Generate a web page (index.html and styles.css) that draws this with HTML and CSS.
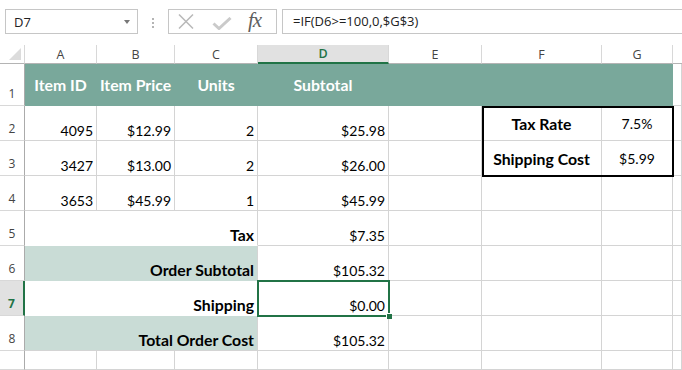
FILE: index.html
```html
<!DOCTYPE html>
<html lang="en">
<head>
    <meta charset="UTF-8">
    <title>Order Sheet</title>
    <link rel="stylesheet" href="styles.css">
</head>
<body>
    <div class="toolbar">
        <div class="namebox">
            <span>D7</span>
            <span class="caret"></span>
        </div>
        <div class="grip"><i></i><i></i><i></i></div>
        <div class="fn-buttons">
            <svg class="ico-x" width="16" height="15" viewBox="0 0 16 15">
                <path d="M1 0.5 L15 14.5 M15 0.5 L1 14.5" stroke="#b9b9b9" stroke-width="1.5" fill="none"/>
            </svg>
            <svg class="ico-check" width="20" height="13" viewBox="0 0 20 13">
                <path d="M1.5 6.5 L7 11.5 L18.5 1" stroke="#cacaca" stroke-width="3" fill="none"/>
            </svg>
            <span class="fx">fx</span>
        </div>
        <div class="formula">=IF(D6&gt;=100,0,$G$3)</div>
    </div>

    <div class="sheet-wrap">
        <div class="sheet">
            <!-- column headers -->
            <div class="ch corner"><span class="tri"></span></div>
            <div class="ch">A</div>
            <div class="ch">B</div>
            <div class="ch">C</div>
            <div class="ch ch-sel">D</div>
            <div class="ch">E</div>
            <div class="ch">F</div>
            <div class="ch">G</div>
            <div class="ch ch-end"></div>

            <!-- row 1 -->
            <div class="rh">1</div>
            <div class="c head">Item ID</div>
            <div class="c head">Item Price</div>
            <div class="c head">Units</div>
            <div class="c head">Subtotal</div>
            <div class="c head"></div>
            <div class="c head"></div>
            <div class="c head"></div>
            <div class="c"></div>

            <!-- row 2 -->
            <div class="rh">2</div>
            <div class="c num">4095</div>
            <div class="c num">$12.99</div>
            <div class="c num">2</div>
            <div class="c num">$25.98</div>
            <div class="c"></div>
            <div class="c mid bold">Tax Rate</div>
            <div class="c mid">7.5%</div>
            <div class="c"></div>

            <!-- row 3 -->
            <div class="rh">3</div>
            <div class="c num">3427</div>
            <div class="c num">$13.00</div>
            <div class="c num">2</div>
            <div class="c num">$26.00</div>
            <div class="c"></div>
            <div class="c mid bold">Shipping Cost</div>
            <div class="c mid">$5.99</div>
            <div class="c"></div>

            <!-- row 4 -->
            <div class="rh">4</div>
            <div class="c num">3653</div>
            <div class="c num">$45.99</div>
            <div class="c num">1</div>
            <div class="c num">$45.99</div>
            <div class="c"></div>
            <div class="c"></div>
            <div class="c"></div>
            <div class="c"></div>

            <!-- row 5 -->
            <div class="rh">5</div>
            <div class="c num bold merge">Tax</div>
            <div class="c num">$7.35</div>
            <div class="c"></div>
            <div class="c"></div>
            <div class="c"></div>
            <div class="c"></div>

            <!-- row 6 -->
            <div class="rh">6</div>
            <div class="c num bold merge shade">Order Subtotal</div>
            <div class="c num">$105.32</div>
            <div class="c"></div>
            <div class="c"></div>
            <div class="c"></div>
            <div class="c"></div>

            <!-- row 7 -->
            <div class="rh rh-sel">7</div>
            <div class="c num bold merge">Shipping</div>
            <div class="c num">$0.00</div>
            <div class="c"></div>
            <div class="c"></div>
            <div class="c"></div>
            <div class="c"></div>

            <!-- row 8 -->
            <div class="rh">8</div>
            <div class="c num bold merge shade last">Total Order Cost</div>
            <div class="c num">$105.32</div>
            <div class="c"></div>
            <div class="c"></div>
            <div class="c"></div>
            <div class="c"></div>

            <!-- row 9 -->
            <div class="rh"></div>
            <div class="c"></div>
            <div class="c"></div>
            <div class="c"></div>
            <div class="c"></div>
            <div class="c"></div>
            <div class="c"></div>
            <div class="c"></div>
            <div class="c"></div>
        </div>

        <!-- borders drawn over the cells -->
        <div class="marks">
            <div class="taxbox"></div>
            <div class="selection"><span class="handle"></span></div>
        </div>
    </div>
</body>
</html>
```

FILE: styles.css
```css
* {
    margin: 0;
    padding: 0;
    box-sizing: border-box;
}

body {
    background: #fff;
    width: 682px;
    height: 370px;
    overflow: hidden;
    font-family: "Open Sans", "Noto Sans", sans-serif;
}

/* formula bar */
.toolbar {
    height: 45px;
    display: flex;
    align-items: flex-start;
    padding-top: 9px;
}

.namebox {
    margin-left: 5px;
    width: 133px;
    height: 25px;
    border: 1px solid #c6c6c6;
    display: flex;
    align-items: center;
    justify-content: space-between;
    padding: 0 7px 0 8px;
    font-size: 13px;
    color: #222;
}

.caret {
    width: 0;
    height: 0;
    border-left: 3.5px solid transparent;
    border-right: 3.5px solid transparent;
    border-top: 4px solid #777;
}

.grip {
    margin-left: 14px;
    margin-top: 9px;
    display: flex;
    flex-direction: column;
    gap: 2px;
}

.grip i {
    display: block;
    width: 2px;
    height: 2px;
    background: #b4b4b4;
}

.fn-buttons {
    margin-left: 14px;
    width: 109px;
    height: 25px;
    border: 1px solid #c6c6c6;
    display: flex;
    align-items: center;
    padding-left: 9px;
}

.ico-x {
    margin-top: -1px;
}

.ico-check {
    margin-left: 18px;
    margin-top: 4px;
}

.fx {
    margin-left: 16px;
    font-family: "Liberation Serif", serif;
    font-style: italic;
    font-size: 21px;
    color: #5f5f5f;
    letter-spacing: -1px;
    margin-top: -2px;
}

.formula {
    flex: 1;
    margin-left: 5px;
    margin-right: -2px;
    height: 25px;
    border: 1px solid #c6c6c6;
    padding-left: 10px;
    font-size: 13px;
    line-height: 23px;
    color: #222;
}

/* sheet grid */
.sheet-wrap {
    position: relative;
    height: 325px;
}

.sheet,
.marks {
    display: grid;
    grid-template-columns: 25px 72px 78px 83px 131px 93px 120px 71px 1fr;
    grid-template-rows: 19px 42px repeat(7, 35px) 1fr;
    height: 100%;
}

.marks {
    position: absolute;
    inset: 0;
    pointer-events: none;
}

.ch {
    border-right: 1px solid #d8d8d8;
    border-bottom: 1px solid #b4b4b4;
    display: flex;
    align-items: center;
    justify-content: center;
    font-size: 12.5px;
    color: #444;
}

.ch-sel {
    background: #e1e1e1;
    border-bottom: 2px solid #217346;
    color: #217346;
    font-weight: 600;
}

.ch-end {
    border-right: none;
}

.corner {
    border-right-color: #d8d8d8;
    justify-content: flex-end;
    align-items: flex-end;
    padding: 0 3px 3px 0;
}

.tri {
    width: 0;
    height: 0;
    border-left: 12px solid transparent;
    border-bottom: 12px solid #dcdcdc;
}

.rh {
    border-right: 1px solid #ababab;
    border-bottom: 1px solid #d8d8d8;
    display: flex;
    align-items: flex-end;
    justify-content: center;
    padding-bottom: 3px;
    font-size: 12px;
    color: #444;
}

.rh-sel {
    background: #e1e1e1;
    border-right: 2px solid #217346;
    color: #217346;
    font-weight: 700;
}

.c {
    border-right: 1px solid #d4d4d4;
    border-bottom: 1px solid #d4d4d4;
    display: flex;
    align-items: flex-end;
    padding: 0 3px 1px;
    font-family: Lato, "Open Sans", sans-serif;
    font-size: 14px;
    color: #000;
    white-space: nowrap;
}

.num {
    justify-content: flex-end;
}

.mid {
    justify-content: center;
    align-items: center;
    padding-bottom: 0;
}

.bold {
    font-weight: 700;
    font-size: 15.8px;
}

.head {
    background: #79a89b;
    border-color: #79a89b;
    color: #fff;
    font-weight: 700;
    font-size: 15.8px;
    justify-content: center;
    align-items: center;
    padding-bottom: 0;
}

.merge {
    grid-column: span 3;
    border-bottom-color: transparent;
}

.shade {
    background: #c9dcd6;
}

.last {
    border-bottom-color: #d4d4d4;
}

/* overlays */
.taxbox {
    grid-column: 7 / 9;
    grid-row: 3 / 5;
    border: 2px solid #000;
    margin: 0 -1px -1px 0;
}

.selection {
    grid-column: 5 / 6;
    grid-row: 8 / 9;
    border: 2px solid #217346;
    margin: -1px -1px -1px -1px;
    position: relative;
}

.handle {
    position: absolute;
    right: -4px;
    bottom: -4px;
    width: 6px;
    height: 6px;
    background: #217346;
    border-top: 1px solid #fff;
    border-left: 1px solid #fff;
}
```
